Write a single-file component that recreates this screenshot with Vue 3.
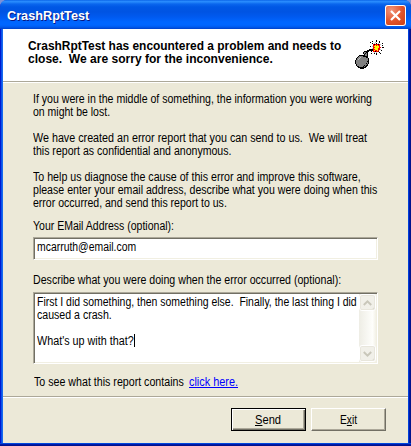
<script setup>
// Condenses or widens a run of text so that it fills the given width in pixels.
const vFit = {
  mounted(el, { value }) {
    const natural = el.offsetWidth
    el.style.transform = `scaleX(${value / natural})`
    el.style.marginRight = `${value - natural}px`
  }
}

const heading = [
  ['CrashRptTest has encountered a problem and needs to', 313],
  ['close.  We are sorry for the inconvenience.', 245]
]
const paragraphs = [
  [
    ['If you were in the middle of something, the information you were working', 339],
    ['on might be lost.', 77]
  ],
  [
    ['We have created an error report that you can send to us.  We will treat', 334],
    ['this report as confidential and anonymous.', 198]
  ],
  [
    ['To help us diagnose the cause of this error and improve this software,', 328],
    ['please enter your email address, describe what you were doing when this', 344],
    ['error occurred, and send this report to us.', 194]
  ]
]
const notes = [
  ['First I did something, then something else.  Finally, the last thing I did', 320],
  ['caused a crash.', 75],
  ['', 0],
  ["What's up with that?", 97]
]

const colors = { K: '#000', G: '#808080', R: '#f00', Y: '#ff0', S: '#c0c0c0', D: '#800000' }
const bomb = [
  '.....................K.......',
  '.................K...K..K....',
  '...............K....S...K....',
  '.................K.S.K.S...K.',
  '..................RKRRRKRS...',
  '..................RRYRYRR..K.',
  '...............K.SRYYYYYR....',
  '..................RRYYYYRR.KK',
  '.................SRYYYYRR....',
  '..............KKKKRRYYYRRS...',
  '............KKKKKKRYRRYR..K..',
  '.........KKKKK..K.RRKRRD.....',
  '........KGGKK......S.S..K....',
  '........KGKGK...K..K.K...K...',
  '.........KGGK........K.......',
  '....KKKKKKGGK................',
  '...KGGGGKKKKK................',
  '..KGGSGGGGGKK................',
  '.KGGSGGGGGGGGK...............',
  '.KGSGGGGGGGGGK...............',
  'KGGGGGGGGGGGGK...............',
  'KGGGGGGGGGGGKK...............',
  'KGGGGGGGGGGGGK...............',
  'KGGGGGGGGGGKGK...............',
  '.KGGGGGGGGGGK................',
  '.KGGGGGGGKGKK................',
  '..KKGGGGKGKK.................',
  '...KKKKKKKK..................',
  '.....KKKK....................'
]
const pixels = bomb.flatMap((row, y) =>
  [...row].flatMap((c, x) => (c === '.' ? [] : [{ x, y, fill: colors[c] }]))
)
</script>

<template>
  <div class="window">
    <header class="titlebar">
      <span class="title"><span v-fit="82" class="fit">CrashRptTest</span></span>
      <button class="close" aria-label="Close">
        <svg width="21" height="21" viewBox="0 0 21 21">
          <path d="M6 6L15 15M15 6L6 15" stroke="#fff" stroke-width="2.2" />
        </svg>
      </button>
    </header>
    <main class="client">
      <section class="banner">
        <div class="heading">
          <div v-for="[text, w] in heading" :key="text" class="line"><span v-fit="w" class="fit">{{ text }}</span></div>
        </div>
        <svg class="bomb" width="29" height="29" viewBox="0 0 29 29" shape-rendering="crispEdges">
          <rect v-for="(p, i) in pixels" :key="i" :x="p.x" :y="p.y" width="1" height="1" :fill="p.fill" />
        </svg>
      </section>
      <section class="body">
        <div v-for="(lines, i) in paragraphs" :key="i" class="paragraph">
          <div v-for="[text, w] in lines" :key="text" class="line"><span v-fit="w" class="fit">{{ text }}</span></div>
        </div>
        <div class="line"><span v-fit="141" class="fit">Your EMail Address (optional):</span></div>
        <div class="field email"><div class="line"><span v-fit="99" class="fit">mcarruth@email.com</span></div></div>
        <div class="line"><span v-fit="308" class="fit">Describe what you were doing when the error occurred (optional):</span></div>
        <div class="field notes">
          <div class="text">
            <div v-for="([text, w], i) in notes" :key="i" class="line">
              <span v-if="text" v-fit="w" class="fit">{{ text }}</span><i v-if="i === 3" class="caret"></i>
            </div>
          </div>
          <div class="scrollbar">
            <div class="arrow"><svg width="9" height="6" viewBox="0 0 9 6"><path d="M.8 5L4.5 1.4L8.2 5" /></svg></div>
            <div class="arrow"><svg width="9" height="6" viewBox="0 0 9 6"><path d="M.8 1L4.5 4.6L8.2 1" /></svg></div>
          </div>
        </div>
        <div class="line contains">
          <span class="lead"><span v-fit="150" class="fit">To see what this report contains</span></span>
          <a class="link"><span v-fit="49" class="fit">click here.</span></a>
        </div>
      </section>
      <footer class="actions">
        <button class="button default"><span v-fit="26" class="fit"><u>S</u>end</span></button>
        <button class="button"><span v-fit="17" class="fit">E<u>x</u>it</span></button>
      </footer>
    </main>
  </div>
</template>

<style>
body {
  margin: 0;
  background: #7b91d8;
}
</style>

<style scoped>
* {
  box-sizing: border-box;
}
.window {
  width: 411px;
  height: 446px;
  padding: 0 3px 3px;
  display: flex;
  flex-direction: column;
  border-radius: 7px 7px 0 0;
  background: linear-gradient(90deg, #0019cf 0 1px, #0a50ea 1px 2px, #166aee 2px 3px, #0054e3 3px 408px, #0040da 408px 409px, #0019a8 409px 410px, #00138c 410px);
  font-family: "Liberation Sans", Arial, sans-serif;
  font-size: 12px;
  color: #000;
  position: relative;
}
.window::after {
  content: "";
  position: absolute;
  inset: auto 0 0;
  height: 3px;
  background: linear-gradient(#0048dc 0 1px, #0019a8 1px 2px, #00138c 2px);
}
.fit {
  display: inline-block;
  white-space: pre;
  transform-origin: 0 0;
}
.titlebar {
  height: 29px;
  flex: none;
  margin: 0 -3px;
  padding: 5px 5px 0 7px;
  display: flex;
  justify-content: space-between;
  border-radius: 7px 7px 0 0;
  background: linear-gradient(#0058e0 0, #2b8cff 1px, #2588fb 2px, #0a66ee 4px, #0057e5 7px, #0054e3 12px, #005af0 17px, #0066ff 22px, #0066ff 25px, #005bee 27px, #0040c8 29px);
}
.title {
  font-size: 13px;
  font-weight: bold;
  line-height: 22px;
  color: #fff;
  text-shadow: 1px 1px #0a1883;
}
.close {
  width: 21px;
  height: 21px;
  padding: 0;
  overflow: hidden;
  border: 0;
  border-radius: 3px;
  box-shadow: inset 0 0 0 1px #fff;
  background: radial-gradient(circle at 30% 25%, #f0957c, #e2542c 50%, #c93b10);
}
.close svg {
  display: block;
}
.client {
  flex: 1;
  display: flex;
  flex-direction: column;
  background: #ece9d8;
}
.banner {
  height: 54px;
  display: flex;
  justify-content: space-between;
  padding: 10px 24px 0 25px;
  background: #fff;
  border-bottom: 1px solid #fff;
  box-shadow: inset 0 -1px #aca899;
}
.heading {
  font-weight: bold;
}
.bomb {
  margin-top: 1px;
}
.line {
  height: 13px;
  line-height: 14px;
  white-space: nowrap;
}
.body {
  height: 313px;
  padding: 9px 30px 0;
}
.paragraph {
  margin-bottom: 13px;
}
.paragraph:nth-child(3) {
  margin-bottom: 10px;
}
.field {
  border: 1px solid;
  border-color: #aca899 #fff #fff #aca899;
  box-shadow: inset 1px 1px #716f64, inset -1px -1px #f1efe2;
  background: #fff;
}
.email {
  height: 23px;
  margin: 5px 0 13px;
  padding: 2px 3px;
}
.notes {
  height: 72px;
  margin: 6px 0 11px;
  display: flex;
  justify-content: space-between;
  padding: 1px;
}
.text {
  padding: 1px 0 0 2px;
}
.caret {
  display: inline-block;
  width: 1px;
  height: 13px;
  vertical-align: top;
  background: #000;
}
.scrollbar {
  width: 17px;
  flex: none;
  display: flex;
  flex-direction: column;
  justify-content: space-between;
  background: linear-gradient(90deg, #eeede5, #fefefb 80%, #f3f1e6);
}
.arrow {
  height: 17px;
  display: flex;
  align-items: center;
  justify-content: center;
  border: 1px solid #fff;
  border-radius: 3px;
  box-shadow: inset 0 0 0 1px #e8e6dc, inset -1px -1px #d0cebf;
  background: #f1f0e9;
}
.arrow path {
  fill: none;
  stroke: #c9c7ba;
  stroke-width: 2;
}
.contains {
  display: flex;
  gap: 5px;
  padding-left: 1px;
}
.link {
  height: 13px;
  color: #00f;
  border-bottom: 1px solid #00f;
}
.actions {
  flex: 1;
  display: flex;
  gap: 5px;
  justify-content: flex-end;
  padding: 11px 22px 0 0;
  border-top: 1px solid #aca899;
  box-shadow: inset 0 1px #fff;
}
.button {
  width: 75px;
  height: 23px;
  padding: 0;
  border: 1px solid;
  border-color: #fff #716f64 #716f64 #fff;
  box-shadow: inset -1px -1px #aca899;
  border-radius: 0;
  background: #ece9d8;
  font: inherit;
  line-height: 14px;
  color: #000;
}
.default {
  border-color: #000;
  box-shadow: inset 1px 1px #fff, inset -1px -1px #716f64, inset -2px -2px #aca899;
}
.button u {
  text-underline-offset: 1px;
}
</style>
